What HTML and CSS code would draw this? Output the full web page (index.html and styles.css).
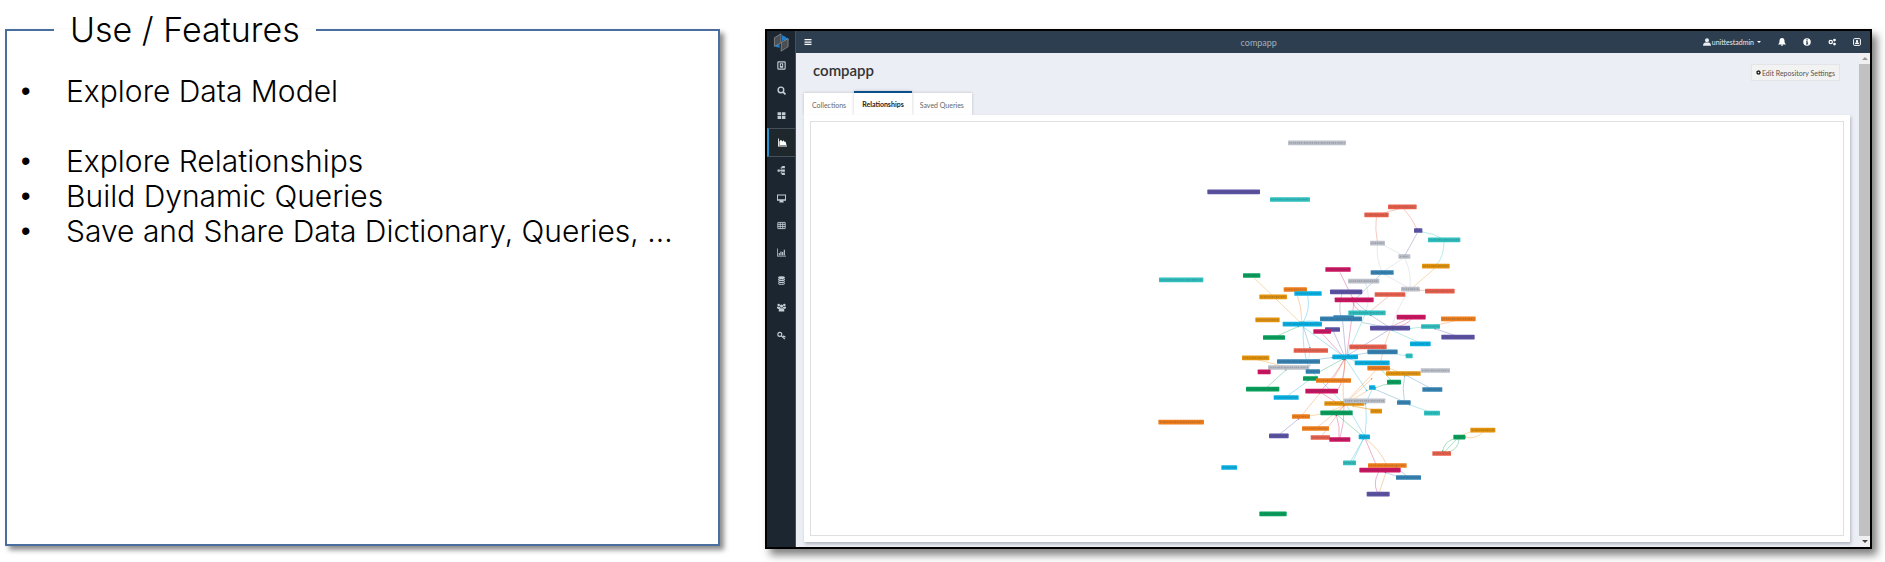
FILE: index.html
```html
<!DOCTYPE html>
<html lang="en">
<head>
<meta charset="utf-8">
<title>Use / Features</title>
<link rel="stylesheet" href="styles.css">
</head>
<body>
<main class="slide">
  <fieldset class="features">
    <legend class="features-title">Use / Features</legend>
    <ul class="features-list">
      <li class="spaced">Explore Data Model</li>
      <li>Explore Relationships</li>
      <li>Build Dynamic Queries</li>
      <li>Save and Share Data Dictionary, Queries, …</li>
    </ul>
  </fieldset>

  <section class="app">
    <nav class="sidebar" aria-label="Main">
      <a class="logo" href="#" aria-label="Home">
        <svg viewBox="0 0 18 20"><path fill="#1f7fd0" d="M1 12l5-4v7zM17 7l-5-4v8z"/><path fill="#4c4e50" stroke="#9a9da0" stroke-width=".7" d="M1.500 5l7-4.200v9.500l-7 4zM9 9.800l7-4v8.700l-7.500 4.700z"/><path fill="#1f7fd0" d="M9.500 2l4 2.500v2L9.500 8.600zM2 14.500l5-3v4z"/></svg>
      </a>
      <div class="nav-top">
        <a href="#" aria-label="Workspace"><svg viewBox="0 0 16 16"><rect x="1.500" y="1.500" width="13" height="13" rx="1" fill="none" stroke="currentColor" stroke-width="2"/><path d="M5 4h6v8H5z"/><path stroke="#1b2630" stroke-width="1.500" d="M8 5v4M6.500 8h3"/></svg></a>
        <a href="#" aria-label="Search"><svg viewBox="0 0 16 16"><circle cx="7" cy="7" r="5" fill="none" stroke="currentColor" stroke-width="2.500"/><path stroke="currentColor" stroke-width="3" d="M10.500 10.500L15 15"/></svg></a>
        <a href="#" aria-label="Tiles"><svg viewBox="0 0 16 16"><path d="M1 2h6.300v5.400H1zM8.700 2H15v5.400H8.700zM1 8.700h6.300V14H1zM8.700 8.700H15V14H8.700z"/></svg></a>
      </div>
      <a class="active" href="#" aria-label="Data explorer"><svg viewBox="0 0 16 16"><path d="M0 1h1.500v12.500H16V15H0z"/><path d="M2.500 12.500V6L5 3l3 3 2-2 2 3 1.500-1L15 12.500z"/></svg></a>
      <div class="nav-rest">
        <a href="#" aria-label="Hierarchy"><svg viewBox="0 0 16 16"><path d="M1 6h4v4H1zM9 0h5v4H9zM9 6h5v4H9zM9 12h5v4H9z"/><path fill="none" stroke="currentColor" stroke-width="1.500" d="M5 8h5M10 2H7.500v12H10"/></svg></a>
        <a href="#" aria-label="Monitor"><svg viewBox="0 0 16 16"><path fill-rule="evenodd" d="M0 1h16v11h-5v1.500h1V15H4v-1.500h1V12H0zM1.700 2.700v6.500h12.600V2.700z"/></svg></a>
        <a href="#" aria-label="Table"><svg viewBox="0 0 16 16"><path fill="none" stroke="currentColor" stroke-width="1.500" d="M1.500 2.500h13v11h-13zM1 6h14M1 9.700h14M5.800 3v11M10.200 3v11"/></svg></a>
        <a href="#" aria-label="Reports"><svg viewBox="0 0 16 16"><path d="M0 1h1.300v12.700H16V15H0zM3 9h2v4H3zM6 6h2v7H6zM9 7h2v6H9zM12 3h2v10h-2z"/></svg></a>
        <a href="#" aria-label="Database"><svg viewBox="0 0 16 16"><ellipse cx="8" cy="3" rx="6" ry="2.500"/><path d="M2 5c2 2 10 2 12 0v2.500c-2 2-10 2-12 0zM2 9c2 2 10 2 12 0v2c-2 2-10 2-12 0zM2 12.500c2 2 10 2 12 0V14c-2 2-10 2-12 0z"/></svg></a>
        <a href="#" aria-label="Users"><svg viewBox="0 0 16 16"><circle cx="3" cy="3.500" r="2.200"/><circle cx="13" cy="3.500" r="2.200"/><circle cx="8" cy="5.500" r="2.800"/><path d="M0 6.500h5l1 3-3 1-3-1zM16 6.500h-5l-1 3 3 1 3-1zM3.500 9.500h9L13 15H3z"/></svg></a>
        <a href="#" aria-label="Keys"><svg viewBox="0 0 16 16"><circle cx="5" cy="6" r="3.500" fill="none" stroke="currentColor" stroke-width="2"/><path fill="none" stroke="currentColor" stroke-width="2" d="M7.500 8.500l6.500 6M10 12l2-3 3 2"/></svg></a>
      </div>
    </nav>

    <div class="shell">
      <header class="topbar">
        <button class="icon-button" aria-label="Toggle menu"><svg viewBox="0 0 16 16"><path d="M1 2h14v2.500H1zM1 6.800h14v2.500H1zM1 11.500h14V14H1z"/></svg></button>
        <span class="topbar-title">compapp</span>
        <div class="topbar-actions">
          <button class="user"><svg viewBox="0 0 16 16"><circle cx="8" cy="4.500" r="4"/><path d="M0 15.500c0-5 3-6.500 4.500-6.500h7c1.500 0 4.500 1.500 4.500 6.500z"/></svg>unittestadmin<span class="caret"></span></button>
          <button class="icon-button" aria-label="Notifications"><svg viewBox="0 0 16 16"><path d="M8 0c4 0 5 3 5 6s1 5 3 7H0c2-2 3-4 3-7s1-6 5-6zM6 13.500h4c0 3-4 3-4 0z"/></svg></button>
          <button class="icon-button" aria-label="Information"><svg viewBox="0 0 16 16"><circle cx="8" cy="8" r="7.500"/><path fill="#2c3e50" d="M6.800 2.500h2.600V5H6.800zM6 6.500h3.400V11h1v2H6v-2h1V8.300H6z"/></svg></button>
          <button class="icon-button" aria-label="Settings"><svg viewBox="0 0 16 16"><g fill="none" stroke="currentColor" stroke-width="2.500"><circle cx="5.500" cy="8" r="3.300"/><circle cx="13" cy="4" r="1.500"/><circle cx="13" cy="12" r="1.500"/></g></svg></button>
          <button class="icon-button" aria-label="Account"><svg viewBox="0 0 16 16"><rect x="1.200" y="1.200" width="13.600" height="13.600" rx="2" fill="none" stroke="currentColor" stroke-width="2"/><circle cx="8" cy="6.200" r="2.400"/><path d="M4 12c0-3 2-3.500 4-3.500s4 .5 4 3.500z"/></svg></button>
        </div>
      </header>

      <div class="workspace">
        <div class="content">
          <div class="heading">
            <h1>compapp</h1>
            <button class="edit"><svg viewBox="0 0 16 16"><circle cx="8" cy="8" r="4.500" fill="none" stroke="currentColor" stroke-width="4"/><circle cx="8" cy="8" r="6.800" fill="none" stroke="currentColor" stroke-width="2" stroke-dasharray="3 2.300"/></svg>Edit Repository Settings</button>
          </div>
          <div class="tabs" role="tablist">
            <button class="tab" role="tab">Collections</button>
            <button class="tab selected" role="tab" aria-selected="true">Relationships</button>
            <button class="tab" role="tab">Saved Queries</button>
          </div>
          <div class="panel">
            <div class="graph-frame">
              <svg id="graph" class="graph" viewBox="0 0 3096 1236" role="img" aria-label="Relationship graph"></svg>
            </div>
          </div>
        </div>
        <div class="scrollbar" aria-hidden="true">
          <span class="arrow up"></span><span class="thumb"></span><span class="arrow down"></span>
        </div>
      </div>
    </div>
  </section>
</main>
<script src="graph.js"></script>
</body>
</html>
```
FILE: styles.css
```css
* { box-sizing: border-box; }
body { margin: 0; background: #fff; color: #000; font-family: Lato, "Open Sans", sans-serif; }
button { font: inherit; color: inherit; border: 0; background: none; padding: 0; cursor: pointer; }
a { color: inherit; text-decoration: none; }
svg { display: block; fill: currentColor; }

.slide { min-height: 100vh; display: grid; grid-template-columns: 715fr 1107fr; gap: 45px; padding: 10px 13px 13px 5px; }

.features { min-width: 0; margin: 0 0 3px; padding: 24px 12px 0 14px; border: 2px solid #4a6f9f; box-shadow: 4px 4px 5px rgba(0, 0, 0, .45); font-family: Inter, "Open Sans", sans-serif; font-weight: 300; }
.features-title { margin-left: 33px; padding: 0 16px; font-size: 34px; line-height: 40px; }
.features-list { margin: 0; padding: 0; list-style: none; font-size: 30px; line-height: 35px; }
.features-list li { display: flex; white-space: nowrap; }
.features-list li::before { content: "•"; flex: 0 0 45px; font-family: "Liberation Sans", sans-serif; font-size: 27px; }
.features-list .spaced { margin-bottom: 35px; }

.app { min-width: 0; margin-top: 19px; display: flex; border: 2px solid #000; box-shadow: 5px 6px 8px rgba(0, 0, 0, .5); font-size: 7px; }
.sidebar { flex: 0 0 29px; display: flex; flex-direction: column; background: #1b2630; color: #c2ced4; border-right: 1px solid #46525c; }
.sidebar a { display: grid; place-items: center; }
.sidebar svg { width: 9px; height: 9px; }
.sidebar .logo { height: 22px; }
.sidebar .logo svg { width: 17px; height: 19px; }
.nav-top { height: 75px; display: grid; grid-auto-rows: 1fr; }
.sidebar .active { height: 29px; color: #fff; background: #1e282c; border: 1px solid #44505a; border-left: 2px solid #2c8fce; border-right: 0; }
.nav-rest { height: 192px; display: grid; grid-auto-rows: 1fr; }

.shell { flex: 1; min-width: 0; display: flex; flex-direction: column; background: #ebeef4; }
.topbar { height: 22px; display: grid; grid-template-columns: 438fr auto 586fr; align-items: center; padding: 0 9px 0 8px; background: #2c3e50; color: #fff; }
.topbar svg { width: 8px; height: 8px; }
.topbar-title { color: #a5afb8; font-size: 9px; }
.topbar-actions { display: flex; justify-content: flex-end; align-items: center; gap: 17px; }
.user { display: flex; align-items: center; gap: 1px; color: #e8ecef; }
.caret { margin-left: 2px; border: 2px solid transparent; border-top-color: #fff; border-bottom: 0; }

.workspace { flex: 1; display: flex; min-height: 0; }
.content { flex: 1; min-width: 0; display: flex; flex-direction: column; padding: 0 9px 5px 8px; }
.heading { height: 38px; display: flex; justify-content: space-between; align-items: flex-start; padding: 5px 10px 0 9px; }
h1 { margin: 0; font-size: 15px; line-height: 24px; font-weight: 600; color: #333; }
.edit { display: flex; align-items: center; gap: 1px; height: 17px; margin-top: 6px; padding: 0 4px; background: #f2f2f2; border: 1px solid #e2e4e8; color: #555; }
.edit svg { width: 5px; height: 5px; color: #222; }
.tabs { display: flex; align-items: flex-end; }
.tab { height: 22px; padding: 2px 8px 0; background: #fff; color: #666; box-shadow: 0 0 3px rgba(0, 0, 0, .2); }
.tab.selected { position: relative; z-index: 1; height: 24px; padding-top: 0; border-top: 2px solid #0b4f8a; color: #222; font-weight: 700; }
.panel { position: relative; z-index: 2; flex: 1; display: flex; padding: 6px; background: #fff; box-shadow: 1px 2px 3px rgba(60, 70, 85, .35); }
.graph-frame { flex: 1; display: flex; min-width: 0; border: 1px solid #dedfe1; }
.graph { flex: 1; min-width: 0; width: 100%; height: 100%; }

.scrollbar { flex: 0 0 11px; display: flex; flex-direction: column; background: #f0f0f0; }
.arrow { height: 11px; display: grid; place-items: center; }
.arrow::before { content: ""; border: 3px solid transparent; }
.up::before { border-bottom-color: #999; border-top: 0; }
.down::before { border-top-color: #444; border-bottom: 0; }
.thumb { flex: 1; background: #c1c1c1; }
```
FILE: graph.js
```js
const COLORS = {
  grey: "#bcc0c9", purple: "#5c52a4", teal: "#2fc0bf", green: "#06a05b", coral: "#e8604c",
  gold: "#e3920c", blue: "#3582b2", magenta: "#cc1460", orange: "#ee7e1b", cyan: "#08b0e2"
};

// Node: [left, right, centre y, colour]. Edge: [x1, y1, x2, y2, colour, bend].
const CLUSTERS = [
  { origin: [987, -6], nodes: [
    [444, 618, 68, "grey"], [202, 360, 215, "purple"], [390, 510, 238, "teal"], [57, 190, 479, "teal"]
  ], edges: [] },
  { origin: [1587, 204], nodes: [
    [144, 230, 50, "coral"], [73, 146, 74, "coral"], [222, 247, 121, "purple"], [264, 361, 149, "teal"],
    [90, 135, 159, "grey"], [175, 211, 199, "grey"], [246, 329, 228, "gold"], [92, 161, 247, "blue"],
    [24, 118, 273, "grey"], [183, 239, 297, "grey"], [255, 344, 303, "coral"], [104, 196, 313, "coral"],
    [170, 257, 381, "magenta"], [303, 407, 386, "orange"]
  ], edges: [
    [180, 54, 122, 70, "coral", 0], [192, 56, 231, 116, "coral", -3], [109, 80, 112, 153, "coral", 3],
    [310, 146, 245, 124, "teal", 4], [312, 155, 291, 222, "teal", -6], [232, 127, 195, 194, "purple", 0],
    [190, 195, 127, 162, "grey", 0], [112, 164, 125, 242, "grey", 5], [188, 204, 132, 242, "grey", 0],
    [195, 204, 210, 291, "grey", -6], [285, 233, 217, 292, "gold", 0], [300, 302, 238, 299, "coral", 0],
    [210, 295, 134, 252, "grey", 0], [122, 252, 48, 324, "blue", 0], [145, 318, 90, 363, "coral", 0],
    [206, 302, 155, 410, "grey", 5], [76, 277, 78, 362, "grey", -8], [0, 246, 38, 323, "magenta", 0],
    [38, 333, 64, 363, "magenta", 5], [45, 333, 78, 362, "blue", 0]
  ] },
  { origin: [1227, 384], nodes: [
    [69, 121, 76, "green"], [316, 392, 58, "magenta"], [330, 427, 125, "purple"], [344, 461, 149, "magenta"],
    [191, 261, 118, "orange"], [223, 305, 130, "cyan"], [118, 201, 140, "gold"], [106, 179, 209, "gold"],
    [188, 306, 222, "cyan"], [129, 195, 262, "green"], [340, 402, 202, "blue"], [300, 426, 206, "blue"],
    [385, 497, 188, "teal"], [315, 360, 238, "purple"], [280, 333, 244, "magenta"]
  ], edges: [
    [102, 82, 240, 215, "gold", 0], [229, 124, 246, 216, "orange", -4], [263, 135, 249, 216, "cyan", -8],
    [163, 260, 235, 228, "green", 0], [366, 130, 363, 200, "purple", 5], [402, 155, 380, 318, "magenta", 0],
    [368, 212, 378, 318, "purple", 0], [435, 192, 380, 318, "teal", 0], [340, 242, 374, 318, "purple", 0],
    [306, 249, 370, 318, "magenta", 0], [250, 228, 270, 292, "blue", 0], [248, 228, 370, 318, "cyan", 0],
    [300, 215, 230, 218, "cyan", 5], [426, 216, 510, 232, "blue", 0]
  ] },
  { origin: [1227, 534], nodes: [
    [221, 324, 151, "coral"], [388, 500, 140, "coral"], [337, 414, 170, "cyan"], [171, 300, 184, "blue"],
    [66, 148, 173, "gold"], [144, 268, 202, "grey"], [113, 152, 215, "magenta"], [257, 300, 214, "blue"],
    [249, 294, 235, "green"], [288, 393, 241, "orange"], [78, 178, 267, "green"], [161, 236, 292, "cyan"],
    [256, 354, 273, "magenta"], [313, 433, 310, "gold"], [371, 496, 302, "grey"], [301, 398, 338, "green"],
    [216, 270, 349, "orange"], [246, 327, 385, "orange"], [272, 330, 412, "coral"], [328, 391, 418, "magenta"],
    [147, 206, 407, "purple"], [416, 450, 410, "cyan"]
  ], edges: [
    [250, 78, 265, 198, "cyan", 6], [270, 155, 270, 195, "grey", 4], [106, 176, 188, 197, "gold", 0],
    [236, 184, 337, 171, "blue", 0], [300, 213, 368, 176, "green", 0], [137, 264, 198, 208, "green", 0],
    [200, 288, 265, 240, "cyan", 0], [340, 236, 374, 177, "orange", 0], [305, 268, 372, 177, "magenta", 4],
    [352, 273, 375, 177, "magenta", 6], [375, 177, 370, 310, "orange", 3], [378, 177, 440, 270, "cyan", 0],
    [270, 208, 366, 304, "cyan", 0], [305, 278, 350, 306, "magenta", 0], [245, 345, 299, 279, "orange", 0],
    [178, 402, 236, 355, "purple", 0], [270, 346, 372, 314, "gold", 5], [292, 380, 375, 314, "orange", 0],
    [305, 407, 372, 314, "coral", 0], [357, 413, 349, 344, "magenta", 4], [360, 413, 372, 315, "magenta", 4],
    [350, 342, 424, 404, "green", 0], [380, 314, 432, 404, "cyan", 0], [435, 405, 437, 308, "cyan", 3],
    [430, 415, 396, 488, "cyan", 0], [436, 416, 468, 492, "magenta", 0], [438, 416, 500, 492, "orange", -6],
    [375, 310, 455, 235, "orange", 0], [378, 310, 451, 265, "gold", 0], [395, 317, 470, 330, "gold", 0]
  ] },
  { origin: [1647, 534], nodes: [
    [30, 150, 84, "purple"], [183, 240, 79, "teal"], [244, 344, 111, "purple"], [150, 212, 131, "cyan"],
    [22, 113, 155, "blue"], [137, 158, 167, "teal"], [-16, 89, 188, "cyan"], [22, 90, 204, "orange"],
    [78, 182, 220, "gold"], [182, 270, 211, "grey"], [81, 123, 246, "green"], [27, 46, 262, "cyan"],
    [187, 247, 268, "blue"], [111, 152, 307, "blue"], [192, 240, 339, "teal"], [31, 66, 333, "gold"],
    [331, 406, 390, "gold"], [280, 316, 411, "green"]
  ], edges: [
    [84, 78, 32, 44, "purple", 0], [150, 52, 95, 78, "magenta", 0], [155, 55, 110, 78, "magenta", -5],
    [183, 80, 150, 84, "teal", 0], [290, 60, 228, 74, "orange", 0], [292, 107, 225, 85, "purple", 0],
    [180, 127, 97, 90, "teal", 0], [84, 90, -35, 163, "purple", 0], [90, 90, 62, 184, "orange", 3],
    [22, 157, -28, 166, "blue", 0], [113, 162, 138, 165, "teal", 0], [-16, 182, -30, 174, "cyan", 0],
    [50, 207, -38, 300, "orange", 0], [85, 202, 120, 216, "gold", 0], [65, 209, 96, 242, "green", 0],
    [98, 250, 46, 262, "green", 3], [215, 265, 140, 225, "blue", 0], [133, 300, 134, 226, "blue", -4],
    [128, 302, 44, 266, "blue", 0], [212, 335, 148, 313, "teal", 0], [48, 329, -20, 316, "gold", 0],
    [36, 268, 16, 310, "cyan", 0], [365, 393, 306, 405, "gold", 5], [370, 394, 316, 410, "gold", -8],
    [282, 415, 248, 452, "green", 8], [290, 416, 254, 454, "green", 0], [297, 416, 268, 454, "green", -8]
  ] },
  { origin: [987, 834], nodes: [
    [877, 933, 160, "coral"], [55, 192, 66, "orange"], [244, 291, 202, "cyan"], [609, 648, 188, "teal"],
    [684, 800, 196, "orange"], [658, 782, 210, "magenta"], [768, 843, 232, "blue"], [680, 749, 282, "purple"],
    [358, 440, 341, "green"]
  ], edges: [
    [632, 182, 670, 116, "teal", 0], [716, 215, 712, 276, "magenta", 8], [738, 215, 718, 276, "orange", 0],
    [800, 226, 768, 201, "blue", 0], [770, 227, 736, 216, "blue", 0]
  ] }
];

const graph = document.getElementById("graph");

function add(parent, name, attributes) {
  const element = document.createElementNS("http://www.w3.org/2000/svg", name);
  for (const key in attributes) element.setAttribute(key, attributes[key]);
  parent.appendChild(element);
  return element;
}

function layer(cluster) {
  return add(graph, "g", { transform: `translate(${cluster.origin.join(" ")})` });
}

for (const cluster of CLUSTERS) {
  const group = layer(cluster);
  for (const [x1, y1, x2, y2, color, bend] of cluster.edges) {
    const length = Math.hypot(x2 - x1, y2 - y1);
    const cx = (x1 + x2) / 2 - (y2 - y1) / length * bend * 2;
    const cy = (y1 + y2) / 2 + (x2 - x1) / length * bend * 2;
    add(group, "path", { d: `M${x1} ${y1}Q${cx} ${cy} ${x2} ${y2}`, fill: "none", stroke: COLORS[color], "stroke-width": 2, opacity: 0.5 });
    add(group, "circle", { cx: x2, cy: y2, r: 2.5, fill: COLORS[color], opacity: 0.8 });
  }
}

for (const cluster of CLUSTERS) {
  const group = layer(cluster);
  for (const [left, right, y, color] of cluster.nodes) {
    add(group, "rect", { x: left, y: y - 8, width: right - left, height: 14, rx: 2, fill: COLORS[color] });
    add(group, "path", { d: `M${left + 4} ${y - 1}H${right - 4}`, stroke: "#303848", "stroke-width": 5, "stroke-dasharray": "4 2 2 2 5 2", opacity: 0.22 });
  }
}
```
